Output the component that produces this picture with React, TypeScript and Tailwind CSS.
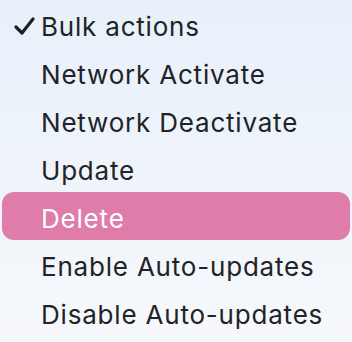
import React from 'react';

const items = [
  'Bulk actions',
  'Network Activate',
  'Network Deactivate',
  'Update',
  'Delete',
  'Enable Auto-updates',
  'Disable Auto-updates',
];

const App: React.FC = () => {
  const selected = 'Bulk actions';
  const active = 'Delete';

  return (
    <div className="w-[352px] h-[342px] overflow-hidden bg-gradient-to-b from-[#e8f0fa] via-[#eff4fb] to-[#f6f8fb] px-[2px] font-['Inter','Liberation_Sans',sans-serif]">
      {items.map((label) => (
        <div
          key={label}
          className={`flex items-center h-[48px] pt-[4px] rounded-[12px] text-[26px] tracking-[0.8px] ${
            label === active ? 'bg-[#e07ca9] text-white' : 'text-[#222326]'
          }`}
        >
          <div className="w-[39px] flex justify-end pr-[6px]">
            {label === selected && (
              <svg width="21" height="18" viewBox="0 0 21 18" fill="none">
                <path d="M2 10 L8 16 L19 2" stroke="#1f2023" strokeWidth="3.2" strokeLinecap="round" strokeLinejoin="round" />
              </svg>
            )}
          </div>
          <span>{label}</span>
        </div>
      ))}
    </div>
  );
};

export default App;
